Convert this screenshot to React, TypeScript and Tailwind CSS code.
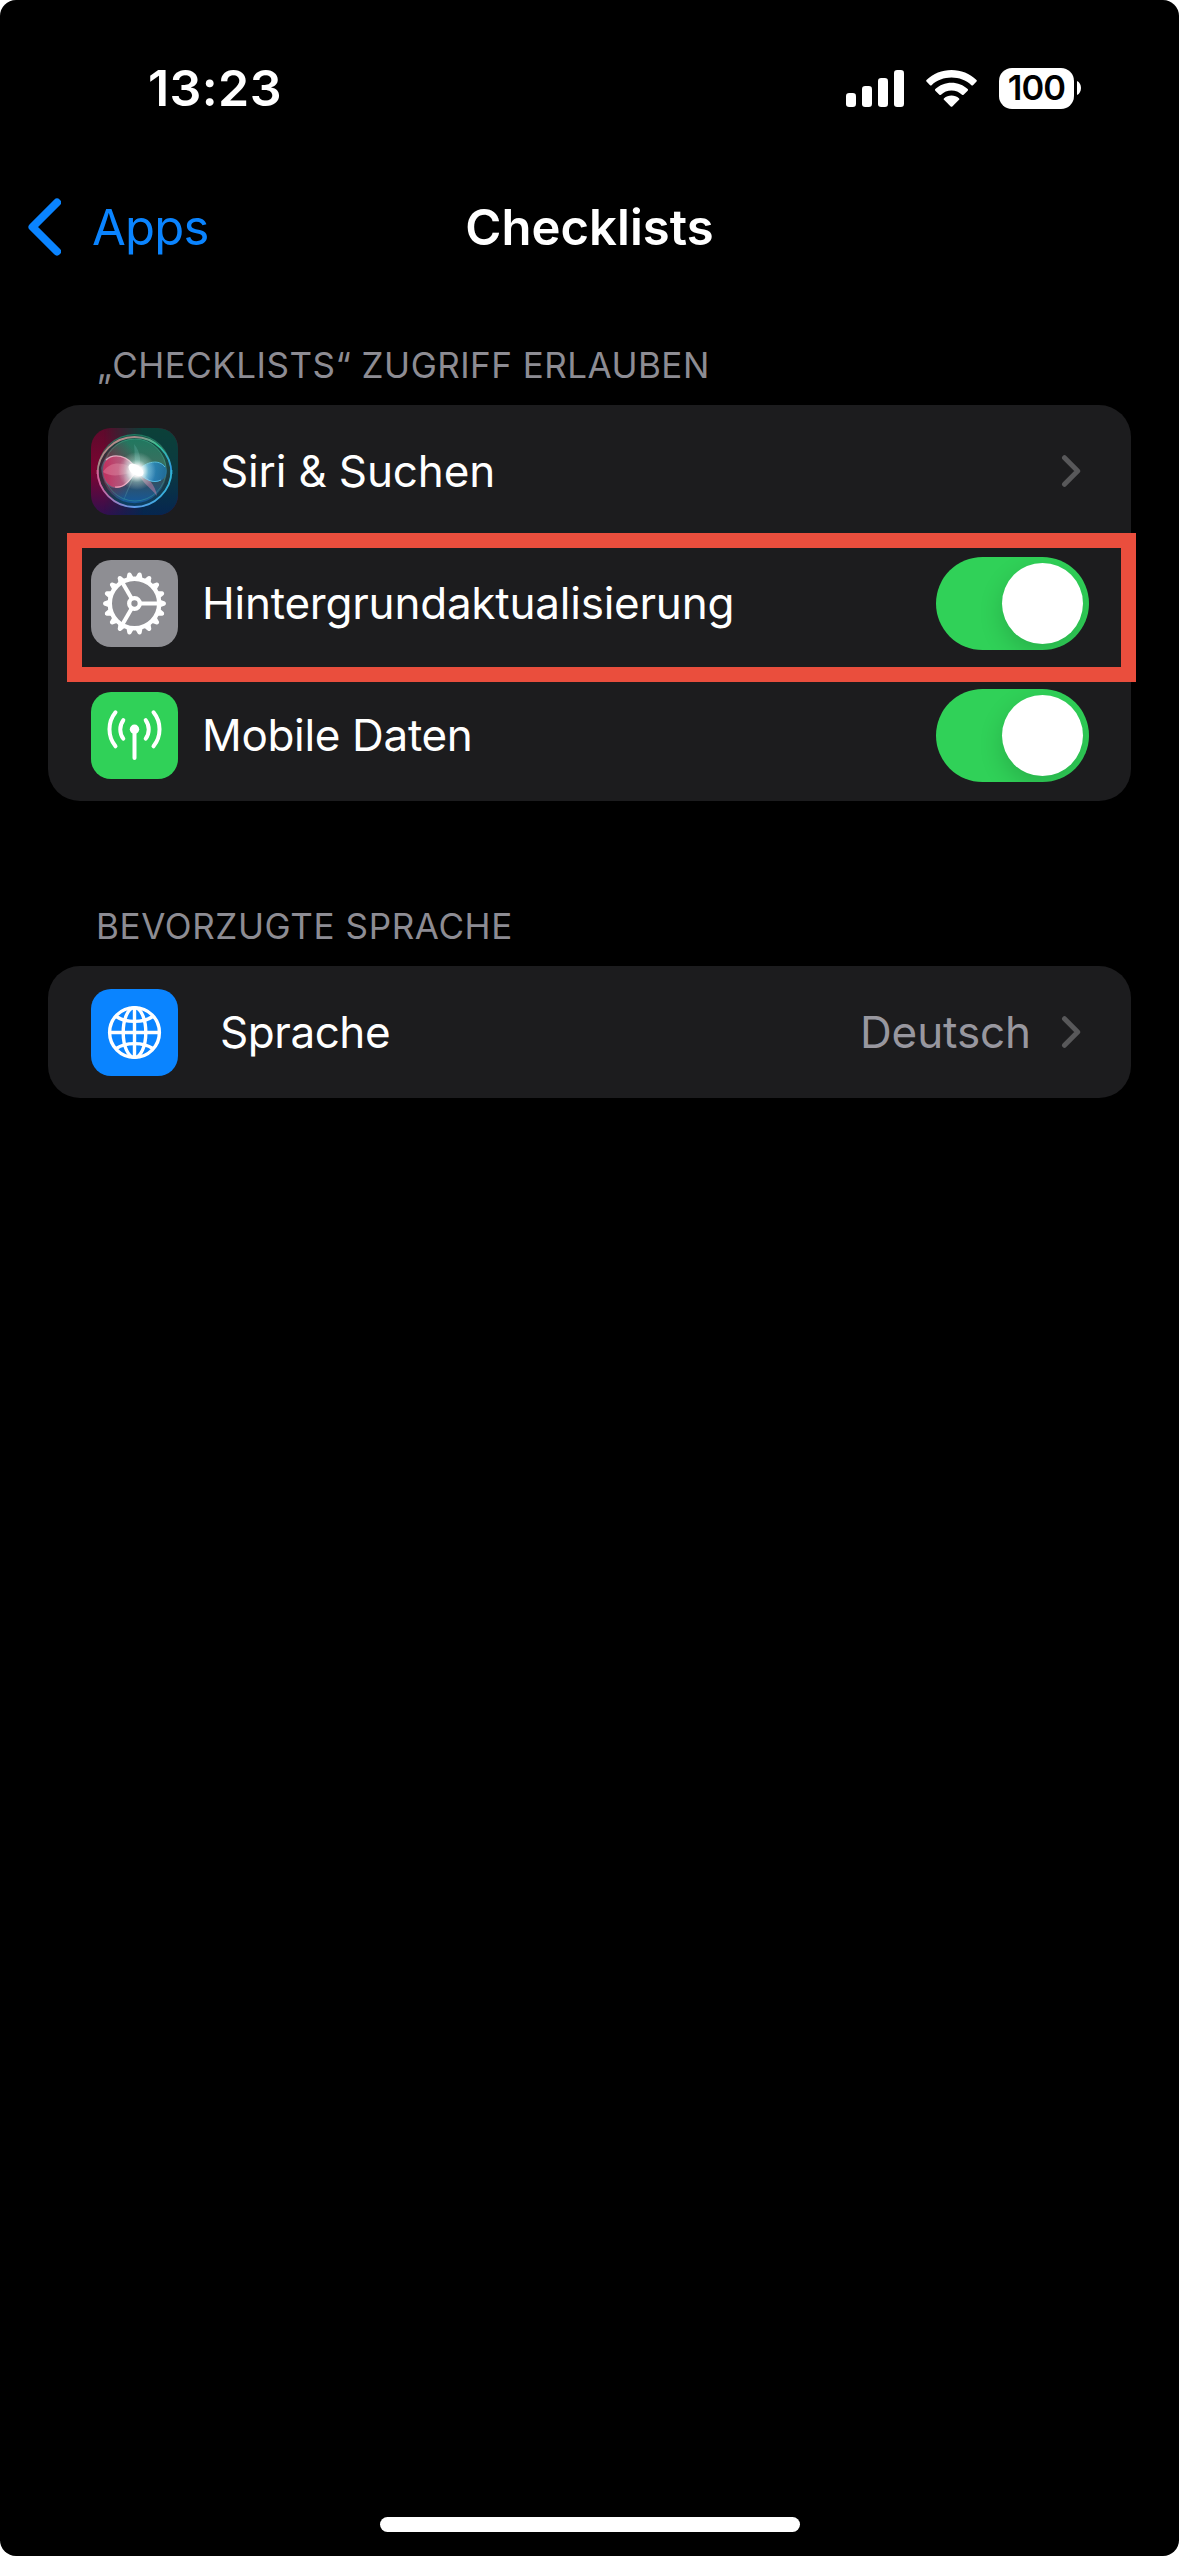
import React from "react";

function SignalIcon() {
  return (
    <svg width="58" height="37" viewBox="0 0 58 37" fill="#fff">
      <rect x="0" y="23" width="10" height="14" rx="3.2" />
      <rect x="16" y="16" width="10" height="21" rx="3.2" />
      <rect x="32" y="8" width="10" height="29" rx="3.2" />
      <rect x="48" y="0" width="10" height="37" rx="3.2" />
    </svg>
  );
}

function WifiIcon() {
  return (
    <svg width="51" height="37" viewBox="0 0 51 37" fill="#fff">
      <path d="M25.5 0C35 0 43.8 3.6 50.5 10Q51.2 10.8 50.5 11.6L47 15.2Q46.2 15.900 45.400 15.200C40 10.300 33 7.600 25.500 7.600S11 10.300 5.600 15.200Q4.800 15.900 4 15.200L.5 11.600Q-.2 10.800.5 10C7.200 3.600 16 0 25.500 0Z" />
      <path d="M25.500 12.800C31.700 12.800 37.400 15.100 41.700 19.100Q42.500 19.900 41.700 20.700L37.600 24.700Q36.900 25.400 36 24.700C33.200 22.200 29.500 20.600 25.500 20.600S17.800 22.200 15 24.700Q14.100 25.400 13.400 24.700L9.300 20.700Q8.500 19.900 9.300 19.100C13.600 15.100 19.300 12.800 25.500 12.800Z" />
      <path d="M25.500 25.600C28.300 25.600 30.900 26.600 32.900 28.200Q33.800 29 33 29.800L26.300 36.500Q25.500 37.200 24.700 36.500L18 29.800Q17.200 29 18.100 28.200C20.100 26.600 22.700 25.600 25.500 25.600Z" />
    </svg>
  );
}

function Battery() {
  return (
    <div className="flex items-center gap-[3px]">
      <div className="flex h-[41px] w-[75px] items-center justify-center rounded-[13px] bg-white text-[34.5px] leading-none font-semibold tracking-[-0.9px] text-black">
        100
      </div>
      <svg width="4" height="14" viewBox="0 0 4 14" fill="#fff">
        <path d="M0 0C2.500 1 4 3.800 4 7S2.500 13 0 14Z" />
      </svg>
    </div>
  );
}

function SiriIcon() {
  return (
    <svg className="shrink-0" width="87" height="87" viewBox="0 0 87 87">
      <defs>
        <clipPath id="tile"><rect width="87" height="87" rx="20" /></clipPath>
        <clipPath id="orb"><circle cx="43.500" cy="43" r="36.500" /></clipPath>
        <linearGradient id="left" x1="0" y1="0" x2="0" y2="1">
          <stop offset="0" stopColor="#5c0a2b" />
          <stop offset=".5" stopColor="#7c0432" />
          <stop offset="1" stopColor="#30104f" />
        </linearGradient>
        <linearGradient id="right" x1="0" y1="0" x2="0" y2="1">
          <stop offset="0" stopColor="#0b4038" />
          <stop offset=".45" stopColor="#0b3a40" />
          <stop offset="1" stopColor="#06264f" />
        </linearGradient>
        <linearGradient id="fade" x1="0" y1="0" x2="1" y2="0">
          <stop offset=".15" stopColor="#fff" stopOpacity="0" />
          <stop offset=".6" stopColor="#fff" />
        </linearGradient>
        <mask id="blend"><rect width="87" height="87" fill="url(#fade)" /></mask>
        <linearGradient id="body" x1="0" y1="0" x2="0" y2="1">
          <stop offset="0" stopColor="#1c7a60" />
          <stop offset=".38" stopColor="#37705f" />
          <stop offset=".62" stopColor="#33505e" />
          <stop offset="1" stopColor="#0e5aa8" />
        </linearGradient>
        <radialGradient id="redSide" cx="4" cy="40" r="42" gradientUnits="userSpaceOnUse">
          <stop offset="0" stopColor="#7b1035" />
          <stop offset=".4" stopColor="#7a2440" stopOpacity=".75" />
          <stop offset="1" stopColor="#7a2440" stopOpacity="0" />
        </radialGradient>
        <linearGradient id="rim" x1="0" y1=".2" x2="1" y2=".8">
          <stop offset="0" stopColor="#c98f8c" />
          <stop offset=".3" stopColor="#a08a88" />
          <stop offset=".6" stopColor="#35c795" />
          <stop offset="1" stopColor="#2f9be0" />
        </linearGradient>
        <linearGradient id="rimLow" x1="0" y1="0" x2="1" y2="0">
          <stop offset="0" stopColor="#d6619a" />
          <stop offset=".5" stopColor="#5f9be8" />
          <stop offset="1" stopColor="#2fb4d8" />
        </linearGradient>
        <linearGradient id="pink" x1="0" y1="0" x2="1" y2="0">
          <stop offset="0" stopColor="#d8245a" />
          <stop offset=".6" stopColor="#c85a80" />
          <stop offset="1" stopColor="#fff" />
        </linearGradient>
        <linearGradient id="blue" x1="0" y1="0" x2="1" y2="0">
          <stop offset="0" stopColor="#c7f2ff" />
          <stop offset=".4" stopColor="#2b96d8" />
          <stop offset="1" stopColor="#1a6fa8" />
        </linearGradient>
        <radialGradient id="glow">
          <stop offset="0" stopColor="#fff" />
          <stop offset=".3" stopColor="#fff" stopOpacity=".9" />
          <stop offset=".6" stopColor="#d5fff6" stopOpacity=".35" />
          <stop offset="1" stopColor="#fff" stopOpacity="0" />
        </radialGradient>
      </defs>
      <g clipPath="url(#tile)">
        <rect width="87" height="87" fill="url(#left)" />
        <rect width="87" height="87" fill="url(#right)" mask="url(#blend)" />
        <circle cx="43.500" cy="43" r="37" fill="url(#body)" />
        <g clipPath="url(#orb)">
          <rect width="87" height="87" fill="url(#redSide)" />
          <circle cx="43.500" cy="43" r="34" fill="none" stroke="#0a2a30" strokeOpacity=".55" strokeWidth="3.500" />
          <circle cx="44" cy="42" r="31" fill="none" stroke="#4fd0a8" strokeOpacity=".3" strokeWidth="1" />
          <path d="M43 16C50 24 51 36 46 43L32 74C36 60 42 50 45 43C43 32 44 24 43 16Z" fill="#7fd8cf" fillOpacity=".22" />
          <path d="M46 43C56 47 65 58 66 68C60 60 50 54 46 43Z" fill="#e08ab0" fillOpacity=".45" />
          <path d="M46 43C36 26 14 20 10 40C12 62 28 70 46 43Z" fill="#5fa9c4" fillOpacity=".35" />
          <path d="M46 42C38 26 20 24 14 34C9 44 14 60 27 60C36 59 41 50 46 42Z" fill="url(#pink)" fillOpacity=".8" />
          <path d="M46 42C37 26 22 25 15 32M46 42C38 54 33 60 24 59" fill="none" stroke="#ffc4d6" strokeOpacity=".75" strokeWidth="1.200" />
          <path d="M12 44C20 32 34 34 46 43C34 47 20 50 12 44Z" fill="#f2a0b4" fillOpacity=".35" />
          <path d="M46 43C57 33 68 32 74 38C79 45 73 54 64 54C56 53 52 48 46 43Z" fill="url(#blue)" fillOpacity=".75" />
          <path d="M46 43C56 33 68 31 74 39M46 43C54 52 62 56 70 52" fill="none" stroke="#5dcbf2" strokeOpacity=".8" strokeWidth="1" />
        </g>
        <path d="M6.500 46A37 37 0 0 1 80.500 46" fill="none" stroke="url(#rim)" strokeWidth="1.800" />
        <path d="M6.500 42A37 37 0 0 0 80.500 42" fill="none" stroke="url(#rimLow)" strokeWidth="1.800" />
        <circle cx="46" cy="43" r="19" fill="url(#glow)" />
        <ellipse cx="45" cy="42" rx="8.500" ry="5" fill="#fff" transform="rotate(35 45 42)" />
      </g>
    </svg>
  );
}

const TEETH = Array.from({ length: 18 }, (_, i) => i * 20);

function GearIcon() {
  return (
    <svg width="87" height="87" viewBox="-43.500 -43.500 87 87" fill="#fff">
      <circle r="24.700" fill="none" stroke="#fff" strokeWidth="4.400" />
      {TEETH.map((a) => (
        <path key={a} d="M25.500 -3.700L30.300 -1.900Q31.400 -1.400 31.400 0T30.300 1.900L25.500 3.700Z" transform={`rotate(${a})`} />
      ))}
      <g stroke="#fff" strokeWidth="4">
        <path d="M6 0H24" />
        <path d="M6 0H24" transform="rotate(120)" />
        <path d="M6 0H24" transform="rotate(240)" />
      </g>
      <circle r="5.300" fill="none" stroke="#fff" strokeWidth="4.300" />
    </svg>
  );
}

function AntennaIcon() {
  return (
    <svg width="87" height="87" viewBox="0 0 87 87" fill="none" stroke="#fff" strokeWidth="4" strokeLinecap="round">
      <circle cx="43.500" cy="37.300" r="4.700" fill="#fff" stroke="none" />
      <path d="M43.500 38V66" />
      <path d="M54.700 28.200A15.500 15.500 0 0 1 54.700 46.600M32.300 28.200A15.500 15.500 0 0 0 32.300 46.600" />
      <path d="M62.500 20.300A27 27 0 0 1 62.500 54.300M24.500 20.300A27 27 0 0 0 24.500 54.300" />
    </svg>
  );
}

function GlobeIcon() {
  return (
    <svg width="87" height="87" viewBox="0 0 87 87" fill="none" stroke="#fff" strokeWidth="3.400">
      <circle cx="43.500" cy="43.500" r="24.900" />
      <ellipse cx="43.500" cy="43.500" rx="11.300" ry="24.900" />
      <path d="M43.500 18V69M18 43.500H69" />
      <path d="M25.300 27.500C34.500 34 52.500 34 61.700 27.500M25.300 59.500C34.500 53 52.500 53 61.700 59.500" />
    </svg>
  );
}

function Chevron() {
  return (
    <svg width="20" height="34" viewBox="0 0 20 34" fill="none" stroke="#58585a" strokeWidth="5" strokeLinecap="round" strokeLinejoin="round">
      <path d="M3.500 3.700L16.700 17L3.500 30.300" />
    </svg>
  );
}

function Tile({ color, children }: { color: string; children: React.ReactNode }) {
  return <div className={`size-[87px] shrink-0 overflow-hidden rounded-[20px] ${color}`}>{children}</div>;
}

function Toggle() {
  return (
    <div className="flex h-[93px] w-[153px] items-center justify-end overflow-hidden rounded-full bg-[#30d158] pr-1.5">
      <div className="size-[81px] rounded-full bg-white shadow-[0_9px_24px_rgba(0,0,0,0.16)]" />
    </div>
  );
}

function Row({ icon, label, labelClass, children }: { icon: React.ReactNode; label: string; labelClass: string; children: React.ReactNode }) {
  return (
    <div className="flex h-[132px] items-center pr-[42px] pl-[43px] text-[44px] leading-none">
      {icon}
      <span className={`flex-1 whitespace-nowrap text-white ${labelClass}`}>{label}</span>
      {children}
    </div>
  );
}

export default function App() {
  return (
    <div className="h-[2556px] w-[1179px] overflow-hidden bg-white">
      <div className="flex h-full flex-col rounded-2xl bg-black font-['Inter',sans-serif] text-white">
        <div className="flex h-44 items-center justify-between pr-[98px] pl-[148px]">
          <span className="text-[50px] leading-none font-semibold tracking-[0.4px]">13:23</span>
          <div className="flex items-center gap-[22px]">
            <SignalIcon />
            <WifiIcon />
            <Battery />
          </div>
        </div>

        <div className="grid h-[102px] grid-cols-[1fr_auto_1fr] items-center text-[49px] leading-none">
          <div className="flex items-center gap-[31px] pl-7 tracking-[-0.8px] text-[#0a84ff]">
            <svg width="33" height="58" viewBox="0 0 33 58" fill="none" stroke="currentColor" strokeWidth="8" strokeLinecap="round" strokeLinejoin="round">
              <path d="M29 4.500L4.500 29L29 53.500" />
            </svg>
            Apps
          </div>
          <h1 className="font-semibold tracking-[0.05px]">Checklists</h1>
        </div>

        <main className="px-12 pt-[47px]">
          <h2 className="flex h-20 items-center pl-[49px] text-[35px] leading-none tracking-[0.48px] text-[#8d8c93]">
            „CHECKLISTS“ ZUGRIFF ERLAUBEN
          </h2>
          <section className="relative rounded-[32px] bg-[#1c1c1e]">
            <Row icon={<SiriIcon />} label="Siri & Suchen" labelClass="ml-[42px] tracking-[-0.15px]">
              <Chevron />
              <span className="w-2" />
            </Row>
            <Row icon={<Tile color="bg-[#8e8e93]"><GearIcon /></Tile>} label="Hintergrundaktualisierung" labelClass="ml-[24px] tracking-[-0.22px]">
              <Toggle />
            </Row>
            <Row icon={<Tile color="bg-[#30d158]"><AntennaIcon /></Tile>} label="Mobile Daten" labelClass="ml-[24px] tracking-[-0.33px]">
              <Toggle />
            </Row>
            <div className="absolute top-32 left-[19px] h-[149px] w-[1069px] border-[15px] border-[#ea4e3d]" />
          </section>

          <h2 className="mt-[85px] flex h-20 items-center pl-12 text-[35px] leading-none tracking-[0.62px] text-[#8d8c93]">
            BEVORZUGTE SPRACHE
          </h2>
          <section className="rounded-[32px] bg-[#1c1c1e]">
            <Row icon={<Tile color="bg-[#0a84ff]"><GlobeIcon /></Tile>} label="Sprache" labelClass="ml-[42px] tracking-[-0.45px]">
              <span className="mr-[30px] tracking-[-0.1px] text-[#98979f]">Deutsch</span>
              <Chevron />
              <span className="w-2" />
            </Row>
          </section>
        </main>

        <div className="mx-auto mt-auto mb-6 h-[15px] w-[420px] rounded-full bg-white" />
      </div>
    </div>
  );
}
